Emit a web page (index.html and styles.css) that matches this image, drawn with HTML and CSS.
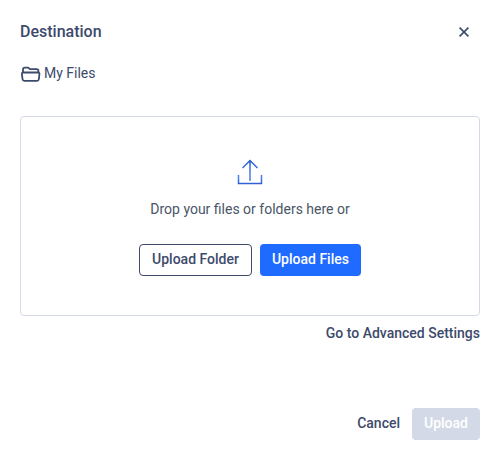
FILE: index.html
```html
<!DOCTYPE html>
<html lang="en">
<head>
  <meta charset="UTF-8">
  <meta name="viewport" content="width=device-width, initial-scale=1.0">
  <title>Upload</title>
  <link rel="stylesheet" href="styles.css">
</head>
<body>
  <div class="modal">
    <div class="modal-header">
      <h1>Destination</h1>
      <button class="close" aria-label="Close">
        <svg width="10" height="10" viewBox="0 0 10 10"><path d="M0.6 0.6L9.4 9.4M9.4 0.6L0.6 9.4"/></svg>
      </button>
    </div>

    <div class="folder">
      <svg width="20" height="16" viewBox="0 0 20 16">
        <path d="M2 7V3.2A1.6 1.6 0 0 1 3.6 1.6H7.2L9 3.2H15.6A1.8 1.8 0 0 1 17.4 5V7"/>
        <path d="M2.4 6.5H17Q18.6 6.5 18.4 8L17.9 13Q17.7 14.8 16 14.8H3.4Q1.7 14.8 1.5 13L0.9 8Q0.8 6.5 2.4 6.5Z"/>
      </svg>
      <span>My Files</span>
    </div>

    <div class="dropzone">
      <svg class="upload-icon" width="26" height="26" viewBox="0 0 26 26">
        <defs>
          <linearGradient id="blue" gradientUnits="userSpaceOnUse" x1="0" y1="0" x2="0" y2="26">
            <stop offset="0" stop-color="#2a5bd0"/>
            <stop offset="0.7" stop-color="#4a80ee"/>
            <stop offset="1" stop-color="#2a5bd0"/>
          </linearGradient>
        </defs>
        <path d="M1.5 16V24.5H24.5V16M13 21.8V1.5M5.5 9L13 1.5L20.5 9"/>
      </svg>
      <p>Drop your files or folders here or</p>
      <div class="buttons">
        <button class="btn btn-outline">Upload Folder</button>
        <button class="btn btn-primary">Upload Files</button>
      </div>
    </div>

    <a class="advanced">Go to Advanced Settings</a>

    <div class="modal-footer">
      <button class="btn btn-text">Cancel</button>
      <button class="btn btn-disabled" disabled>Upload</button>
    </div>
  </div>
</body>
</html>
```

FILE: styles.css
```css
* {
  box-sizing: border-box;
}

body {
  margin: 0;
  font-family: Roboto, sans-serif;
  font-size: 14px;
  line-height: 20px;
  color: #3d4a6b;
  background: #fff;
}

button {
  font: inherit;
  font-weight: 500;
  color: inherit;
  border: none;
  background: none;
  padding: 0;
  white-space: nowrap;
}

.modal {
  height: 456px;
  padding: 20px 20px 16px;
  display: flex;
  flex-direction: column;
}

.modal-header {
  display: flex;
  justify-content: space-between;
  align-items: center;
  height: 24px;
}

h1 {
  margin: 0;
  font-size: 16px;
  font-weight: 500;
}

.close {
  display: flex;
  margin-right: 11px;
}

.close svg {
  stroke: #3d4a6b;
  stroke-width: 1.6;
}

.folder {
  display: flex;
  align-items: center;
  gap: 3px;
  height: 20px;
  margin-top: 19px;
}

.folder svg {
  margin: 2px 0 0 1px;
  fill: none;
  stroke: #3d4a6b;
  stroke-width: 1.8;
  stroke-linejoin: round;
}

.dropzone {
  display: flex;
  flex-direction: column;
  align-items: center;
  height: 200px;
  margin-top: 33px;
  padding-top: 42px;
  border: 1px solid #d3d9e6;
  border-radius: 4px;
}

.upload-icon {
  fill: none;
  stroke: url(#blue);
  stroke-width: 1.5;
}

.dropzone p {
  margin: 14px 0 25px;
  color: #4a5568;
}

.buttons {
  display: flex;
  gap: 8px;
}

.btn {
  height: 32px;
  padding: 0 12px 2px;
  border-radius: 4px;
}

.btn-outline {
  border: 1px solid #3d4a6b;
}

.btn-primary {
  color: #fff;
  background: #1f6bff;
}

.btn-text {
  padding: 0 0 2px;
}

.btn-disabled {
  color: #fff;
  background: #d3d9e6;
}

.advanced {
  align-self: flex-end;
  margin-top: 7px;
  font-weight: 500;
}

.modal-footer {
  display: flex;
  justify-content: flex-end;
  gap: 12px;
  margin-top: auto;
}
```
